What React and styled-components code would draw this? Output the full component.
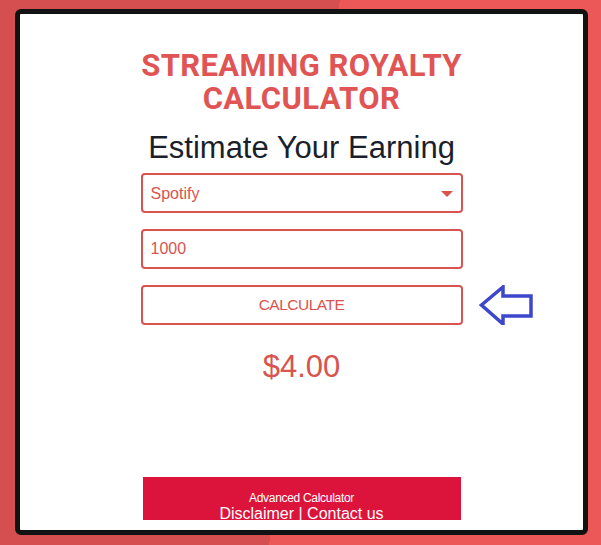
import React, { useState } from "react";
import styled, { createGlobalStyle } from "styled-components";

const GlobalStyle = createGlobalStyle`
  html, body {
    margin: 0;
    padding: 0;
    height: 100%;
  }
  body {
    background: linear-gradient(97.4deg, #d64f50 50.6%, #ec5757 50.6%);
    font-family: "Liberation Sans", Arial, sans-serif;
    overflow: hidden;
  }
  #root {
    height: 100%;
  }
`;

const Page = styled.div`
  box-sizing: border-box;
  height: 545px;
  padding: 9px 13px 10px 15px;
`;

const Card = styled.main`
  box-sizing: border-box;
  height: 100%;
  background: #ffffff;
  border: 5px solid #121212;
  border-radius: 6px;
  display: flex;
  flex-direction: column;
  align-items: center;
  padding-top: 35px;
`;

const Title = styled.h1`
  margin: 0;
  font-family: Roboto, "Liberation Sans", sans-serif;
  font-weight: 700;
  font-size: 31px;
  line-height: 33px;
  letter-spacing: 0.4px;
  color: #e05454;
  text-align: center;
  text-transform: uppercase;
`;

const Subtitle = styled.h2`
  margin: 15px 0 0;
  font-weight: 400;
  font-size: 31px;
  color: #1b1f2b;
`;

const Form = styled.form`
  width: 322px;
  margin-top: 7px;
  display: flex;
  flex-direction: column;
  gap: 16px;
`;

const Row = styled.div`
  position: relative;
  display: flex;
  align-items: center;
`;

const field = `
  box-sizing: border-box;
  width: 322px;
  height: 40px;
  border: 2px solid #d9534f;
  border-radius: 4px;
  background: #ffffff;
  color: #d9534f;
  font-family: "Liberation Sans", Arial, sans-serif;
  font-size: 16px;
  outline: none;
`;

const Select = styled.select`
  ${field}
  appearance: none;
  padding: 0 30px 0 8px;
`;

const Caret = styled.span`
  position: absolute;
  right: 10px;
  top: 18px;
  width: 0;
  height: 0;
  border-left: 6px solid transparent;
  border-right: 6px solid transparent;
  border-top: 6px solid #d9534f;
  pointer-events: none;
`;

const Input = styled.input`
  ${field}
  padding: 0 8px;
`;

const Button = styled.button`
  ${field}
  font-size: 15.5px;
  letter-spacing: -0.5px;
  text-transform: uppercase;
  cursor: pointer;
`;

const Pointer = styled.svg`
  position: absolute;
  left: 338px;
  top: 0;
`;

const Result = styled.div`
  margin-top: 24px;
  font-size: 31px;
  color: #d9534f;
`;

const Footer = styled.footer`
  box-sizing: border-box;
  margin-top: auto;
  margin-bottom: 10px;
  width: 318px;
  height: 43px;
  padding-top: 14px;
  overflow: hidden;
  background: #dc143c;
  color: #ffffff;
  text-align: center;
`;

const SmallLink = styled.a`
  display: block;
  font-size: 12px;
  letter-spacing: -0.3px;
  color: inherit;
  text-decoration: none;
`;

const Links = styled.div`
  font-size: 16px;
  a {
    color: inherit;
    text-decoration: none;
  }
`;

const rates = { Spotify: 0.004, "Apple Music": 0.008, YouTube: 0.002, Tidal: 0.0125 };

export default function App() {
  const [service, setService] = useState("Spotify");
  const [streams, setStreams] = useState("1000");
  const [total, setTotal] = useState(4);

  const calculate = (e) => {
    e.preventDefault();
    setTotal((Number(streams) || 0) * rates[service]);
  };

  return (
    <>
      <GlobalStyle />
      <Page>
        <Card>
          <Title>
            Streaming Royalty
            <br />
            Calculator
          </Title>
          <Subtitle>Estimate Your Earning</Subtitle>
          <Form onSubmit={calculate}>
            <Row>
              <Select value={service} onChange={(e) => setService(e.target.value)}>
                {Object.keys(rates).map((name) => (
                  <option key={name}>{name}</option>
                ))}
              </Select>
              <Caret />
            </Row>
            <Row>
              <Input value={streams} onChange={(e) => setStreams(e.target.value)} />
            </Row>
            <Row>
              <Button type="submit">Calculate</Button>
              <Pointer width="56" height="40" viewBox="0 0 56 40">
                <path
                  d="M2.5 20 L24 2 L24 11 L52 11 L52 31 L24 31 L24 39 Z"
                  fill="none"
                  stroke="#3c47cc"
                  strokeWidth="3.5"
                  strokeLinejoin="miter"
                />
              </Pointer>
            </Row>
          </Form>
          <Result>${total.toFixed(2)}</Result>
          <Footer>
            <SmallLink href="#">Advanced Calculator</SmallLink>
            <Links>
              <a href="#">Disclaimer</a> | <a href="#">Contact us</a>
            </Links>
          </Footer>
        </Card>
      </Page>
    </>
  );
}
